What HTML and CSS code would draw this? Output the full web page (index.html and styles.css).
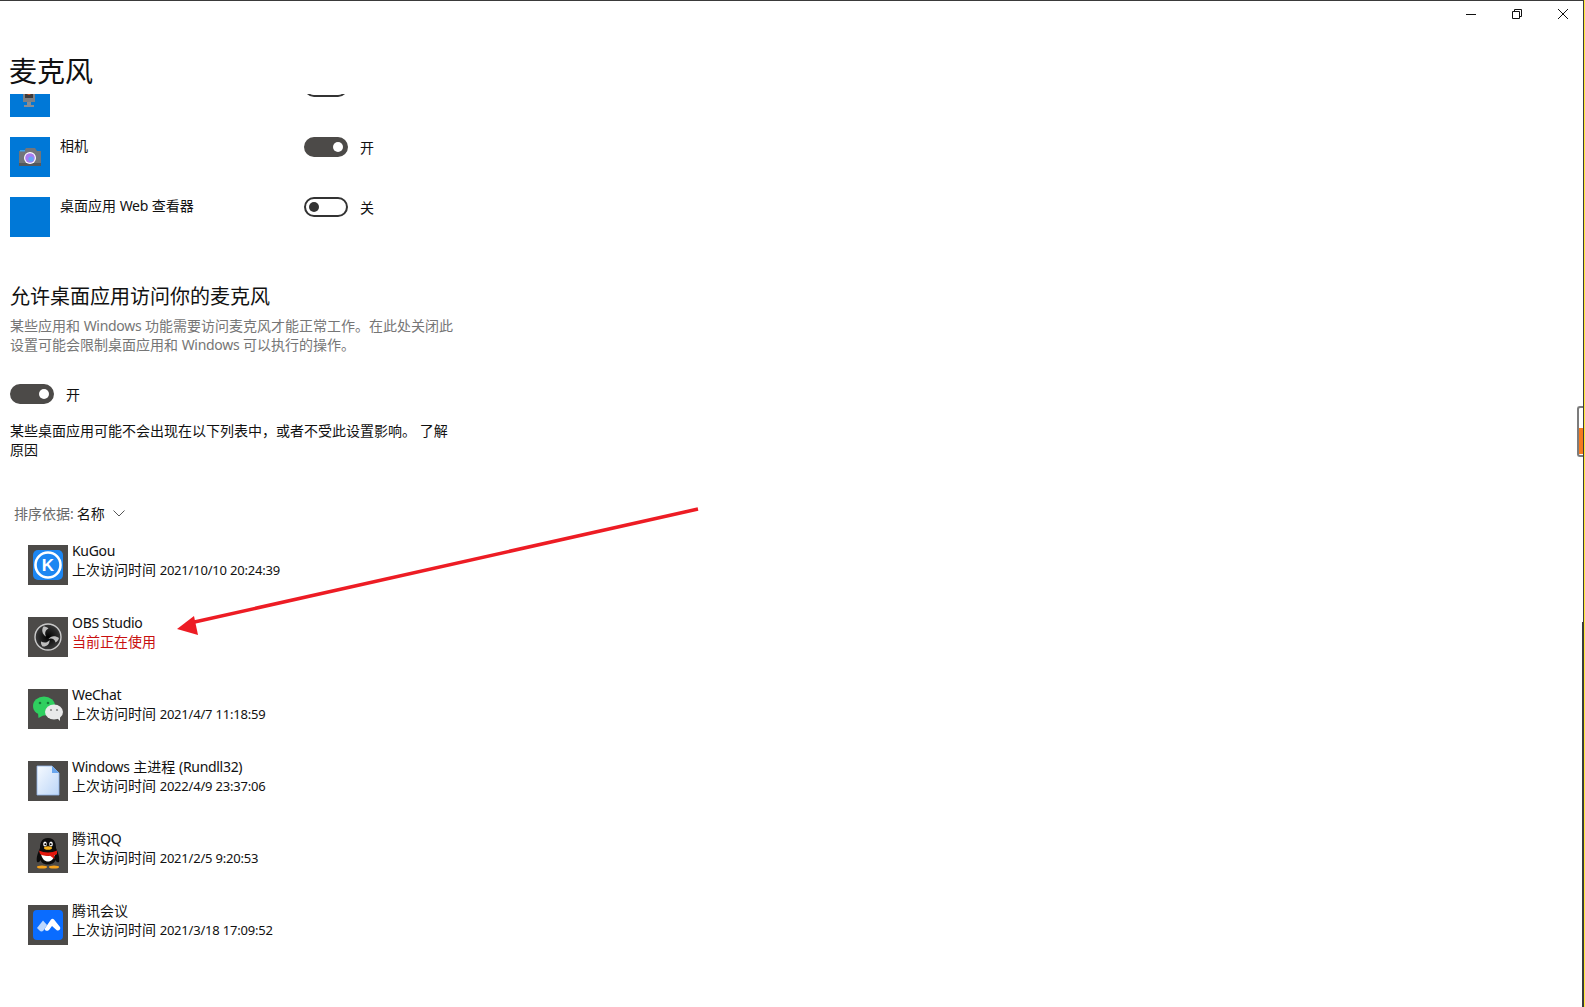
FILE: index.html
```html
<!DOCTYPE html>
<html lang="zh-CN">
<head>
<meta charset="utf-8">
<title>麦克风</title>
<link rel="stylesheet" href="styles.css">
</head>
<body>
<div class="window">
  <header class="titlebar">
    <svg class="winbtn" viewBox="0 0 10 10"><path d="M0 5.5H10" /></svg>
    <svg class="winbtn" viewBox="0 0 10 10"><path d="M.5 2.5H7.5V9.5H.5ZM2.5 2.5V.5H9.5V7.5H7.5" /></svg>
    <svg class="winbtn" viewBox="0 0 10 10"><path d="M0 0L10 10M10 0L0 10" /></svg>
  </header>
  <h1 class="page-title">麦克风</h1>
  <main class="scroller">
    <div class="content">
      <section class="store-apps">
        <div class="store-row">
          <svg class="tile tile-blue" viewBox="0 0 40 40"><rect x="13" y="10" width="12" height="15" fill="#7d8085"/><rect x="15" y="12" width="8" height="9" fill="#3d3a3a"/><circle cx="19" cy="16" r="2" fill="#d9541e"/><rect x="17" y="25" width="4" height="3" fill="#8a8d92"/><rect x="14" y="28" width="10" height="2" fill="#8a8d92"/></svg>
          <span class="store-name"></span>
          <span class="toggle toggle-off"><i class="knob"></i></span>
          <span class="state"></span>
        </div>
        <div class="store-row">
          <svg class="tile tile-blue" viewBox="0 0 40 40"><path d="M9 14H14L16 11H25L27 14H31V29H9Z" fill="#72757a"/><rect x="9" y="26" width="22" height="3" fill="#55585c"/><circle cx="20" cy="21" r="6" fill="#fff"/><circle cx="20" cy="21" r="4.8" fill="#a97cf0"/><circle cx="21" cy="22" r="2.6" fill="#63a7f5"/><rect x="10" y="13" width="5" height="1.5" fill="#3aa0e8"/></svg>
          <span class="store-name">相机</span>
          <span class="toggle toggle-on"><i class="knob"></i></span>
          <span class="state">开</span>
        </div>
        <div class="store-row">
          <span class="tile tile-blue"></span>
          <span class="store-name">桌面应用 <span class="lat">Web</span> 查看器</span>
          <span class="toggle toggle-off"><i class="knob"></i></span>
          <span class="state">关</span>
        </div>
      </section>

      <section class="desktop-section">
        <h2 class="section-title">允许桌面应用访问你的麦克风</h2>
        <p class="hint">某些应用和 <span class="lat">Windows</span> 功能需要访问麦克风才能正常工作。在此处关闭此设置可能会限制桌面应用和 <span class="lat">Windows</span> 可以执行的操作。</p>
        <div class="master-toggle">
          <span class="toggle toggle-on"><i class="knob"></i></span>
          <span class="state">开</span>
        </div>
        <p class="note">某些桌面应用可能不会出现在以下列表中，或者不受此设置影响。 了解原因</p>
        <div class="sort">
          <span class="sort-label">排序依据:</span>
          <span class="sort-value">名称</span>
          <svg class="chevron" viewBox="0 0 12 7"><path d="M.5 .5L6 6L11.5 .5"/></svg>
        </div>
      </section>

      <ul class="app-list">
        <li class="app">
          <svg class="tile tile-gray" viewBox="0 0 40 40"><rect x="5" y="5" width="30" height="30" rx="5" fill="#1c86f2"/><circle cx="20" cy="20" r="12.500" fill="none" stroke="#fff" stroke-width="2.600"/><text x="20" y="26" class="k-letter">K</text></svg>
          <div class="app-text"><div class="lat">KuGou</div><div>上次访问时间 <span class="stamp">2021/10/10 20:24:39</span></div></div>
        </li>
        <li class="app">
          <svg class="tile tile-gray" viewBox="0 0 40 40"><defs><radialGradient id="obsbg"><stop offset="0" stop-color="#000"/><stop offset="1" stop-color="#3a3a3a"/></radialGradient></defs><circle cx="20" cy="20" r="13" fill="url(#obsbg)" stroke="#c9c9c9" stroke-width="1.400"/><g fill="#bdbdbd"><path d="M15.500 9.500C13 13 14.500 17.500 18 19.500C16.500 16.500 17 13 20.500 11.500C19 10 17 9.500 15.500 9.500Z"/><path d="M31 21C27 18 22.500 19 20.500 22C23 20.800 27 21.500 27.500 25.500C29 24.500 30.500 23 31 21Z"/><path d="M14.500 29.500C18.500 30 22 27 21.500 23C20 25.500 16.500 26.500 13 24.500C12.800 26.500 13.300 28 14.500 29.500Z"/></g></svg>
          <div class="app-text"><div class="lat">OBS Studio</div><div class="in-use">当前正在使用</div></div>
        </li>
        <li class="app">
          <svg class="tile tile-gray" viewBox="0 0 40 40"><ellipse cx="16" cy="17" rx="11" ry="9.500" fill="#2fcf5f"/><path d="M10 24L10.500 29L16 26Z" fill="#2fcf5f"/><ellipse cx="26" cy="23" rx="9" ry="7.500" fill="#e9e9e9"/><path d="M29 29L32 32L32 26Z" fill="#e9e9e9"/><circle cx="12" cy="14" r="1.300" fill="#167a38"/><circle cx="20" cy="14" r="1.300" fill="#167a38"/><circle cx="23" cy="21" r="1.100" fill="#8a8a8a"/><circle cx="29" cy="21" r="1.100" fill="#8a8a8a"/></svg>
          <div class="app-text"><div class="lat">WeChat</div><div>上次访问时间 <span class="stamp">2021/4/7 11:18:59</span></div></div>
        </li>
        <li class="app">
          <svg class="tile tile-gray" viewBox="0 0 40 40"><defs><linearGradient id="docfill" x1="0" y1="0" x2="1" y2="1"><stop offset="0" stop-color="#f6faff"/><stop offset="1" stop-color="#bcd6f8"/></linearGradient></defs><path d="M9 5H24L31 12V34H9Z" fill="url(#docfill)" stroke="#8fb4e8" stroke-width=".8"/><path d="M24 5V12H31Z" fill="#6aa6ee"/></svg>
          <div class="app-text"><div><span class="lat">Windows</span> 主进程 <span class="lat">(Rundll32)</span></div><div>上次访问时间 <span class="stamp">2022/4/9 23:37:06</span></div></div>
        </li>
        <li class="app">
          <svg class="tile tile-gray" viewBox="0 0 40 40"><path d="M20 5C13 5 12 11 12 15C10 20 8 24 9 29C11 30 12 28 12.500 27C14 33 26 33 27.500 27C28 28 29 30 31 29C32 24 30 20 28 15C28 11 27 5 20 5Z" fill="#0c0c0c"/><path d="M13 21C15 31 25 31 27 21L20 23Z" fill="#fff"/><path d="M11 17.500C16 20 24 20 29 17.500L29 21C28 22 27 22 26 22.500L26.500 26L22 22.800C19 23 15 23 12 21Z" fill="#e3170d"/><ellipse cx="17" cy="11" rx="1.800" ry="2.500" fill="#fff"/><ellipse cx="23" cy="11" rx="1.800" ry="2.500" fill="#fff"/><circle cx="17.300" cy="11.300" r="1" fill="#000"/><circle cx="22.700" cy="11.300" r="1" fill="#000"/><ellipse cx="20" cy="15" rx="4" ry="1.800" fill="#f6b21b"/><ellipse cx="14" cy="34" rx="5" ry="1.500" fill="#f6a21b"/><ellipse cx="26" cy="34" rx="5" ry="1.500" fill="#f6a21b"/></svg>
          <div class="app-text"><div>腾讯<span class="lat">QQ</span></div><div>上次访问时间 <span class="stamp">2021/2/5 9:20:53</span></div></div>
        </li>
        <li class="app">
          <svg class="tile tile-gray" viewBox="0 0 40 40"><rect x="5" y="5" width="30" height="30" rx="4" fill="#0a6cff"/><path d="M9 23L15 15.500L19 20L15.500 25.500C14 27 12.500 26.500 11.500 25.500Z" fill="#bcd8ff"/><path d="M16.500 24L23 14.500C24 13.500 25 13.500 26 14.500L32 22C33 24 31 26 29 25.500L24 21L21 25C19 26.500 17.500 26 16.500 24Z" fill="#fff"/></svg>
          <div class="app-text"><div>腾讯会议</div><div>上次访问时间 <span class="stamp">2021/3/18 17:09:52</span></div></div>
        </li>
      </ul>
    </div>
  </main>
  <div class="scrollthumb"><i class="scrollfill"></i></div>
  <div class="edge-lower"></div>
  <svg class="annotation" viewBox="0 0 1585 1007"><path d="M698 509L190 623" stroke="#ed1c24" stroke-width="3.500" fill="none"/><path d="M177 629L194 616L198 635Z" fill="#ed1c24"/></svg>
</div>
</body>
</html>
```
FILE: styles.css
```css
* { box-sizing: border-box; }
html, body { margin: 0; padding: 0; height: 100%; background: #fff; }
body {
  font-family: "Noto Sans", "Noto Sans CJK SC", sans-serif;
  font-size: 14px;
  color: #111;
  border-right: 1px solid #ffe93b;
  overflow: hidden;
}
.window {
  position: relative;
  display: flex;
  flex-direction: column;
  height: 1007px;
  border-top: 1px solid #3a3a3a;
  border-right: 1px solid #3a3a3a;
}
.titlebar {
  display: flex;
  justify-content: flex-end;
  align-items: flex-start;
  gap: 36px;
  height: 32px;
  padding: 8px 15px 0 0;
}
.winbtn { width: 10px; height: 10px; fill: none; stroke: #111; stroke-width: 1; }
.page-title {
  margin: 0;
  height: 61px;
  padding-left: 9px;
  font-size: 28px;
  font-weight: 400;
  line-height: 76px;
  color: #111;
}
.scroller { flex: 1; overflow: hidden; }
.content { margin-top: -17px; }
.lat { letter-spacing: -.3px; }
.stamp { font-size: 13px; letter-spacing: -.2px; }
.store-apps { display: flex; flex-direction: column; gap: 20px; padding-left: 10px; }
.store-row { display: flex; align-items: flex-start; height: 40px; position: relative; }
.tile { display: block; width: 40px; height: 40px; flex: none; }
.tile-blue { background: #0078d7; }
.tile-gray { background: #4c4a48; }
.store-name { width: 254px; padding-left: 10px; line-height: 18px; }
.toggle {
  display: flex;
  align-items: center;
  width: 44px;
  height: 20px;
  border-radius: 10px;
  border: 2px solid #333;
  flex: none;
  padding: 0 3px;
}
.toggle-on { background: #4c4a48; border-color: #4c4a48; justify-content: flex-end; }
.toggle-off { background: #fff; justify-content: flex-start; }
.knob { display: block; width: 10px; height: 10px; border-radius: 50%; }
.toggle-on .knob { background: #fff; }
.toggle-off .knob { background: #333; }
.state { margin-left: 12px; line-height: 22px; }
.desktop-section { padding: 46px 0 0 10px; width: 459px; }
.section-title { margin: 0; font-size: 20px; font-weight: 400; line-height: 28px; }
.hint { margin: 6px 0 0; color: #767676; line-height: 18.500px; }
.master-toggle { display: flex; margin-top: 30px; height: 20px; }
.note { margin: 18px 0 0; line-height: 18.500px; color: #111; }
.sort { display: flex; align-items: center; margin-top: 44px; padding-left: 4px; height: 20px; }
.sort-label { color: #6b6b6b; }
.sort-value { margin-left: 3px; color: #111; }
.chevron { width: 12px; height: 7px; margin-left: 8px; fill: none; stroke: #555; stroke-width: 1; }
.app-list { list-style: none; margin: 22px 0 0; padding: 0 0 0 28px; display: flex; flex-direction: column; gap: 32px; }
.app { display: flex; height: 40px; }
.app-text { margin: -4px 0 0 4px; line-height: 19px; color: #111; }
.in-use { color: #c80f0f; }
.k-letter { font-family: "Liberation Sans", sans-serif; font-size: 17px; font-weight: 700; fill: #fff; text-anchor: middle; }
.scrollthumb {
  position: absolute;
  top: 405px;
  right: 0;
  width: 6px;
  height: 51px;
  border: 2px solid #7c7c7c;
  border-right: 0;
  border-radius: 3px 0 0 3px;
  display: flex;
  align-items: flex-end;
  padding-bottom: 1px;
}
.scrollfill { display: block; width: 4px; height: 26px; background: #f47a20; }
.edge-lower { position: absolute; top: 621px; bottom: 0; right: 0; width: 1px; background: #3a3a3a; }
.annotation { position: absolute; left: 0; top: -1px; width: 1585px; height: 1007px; pointer-events: none; }
```
